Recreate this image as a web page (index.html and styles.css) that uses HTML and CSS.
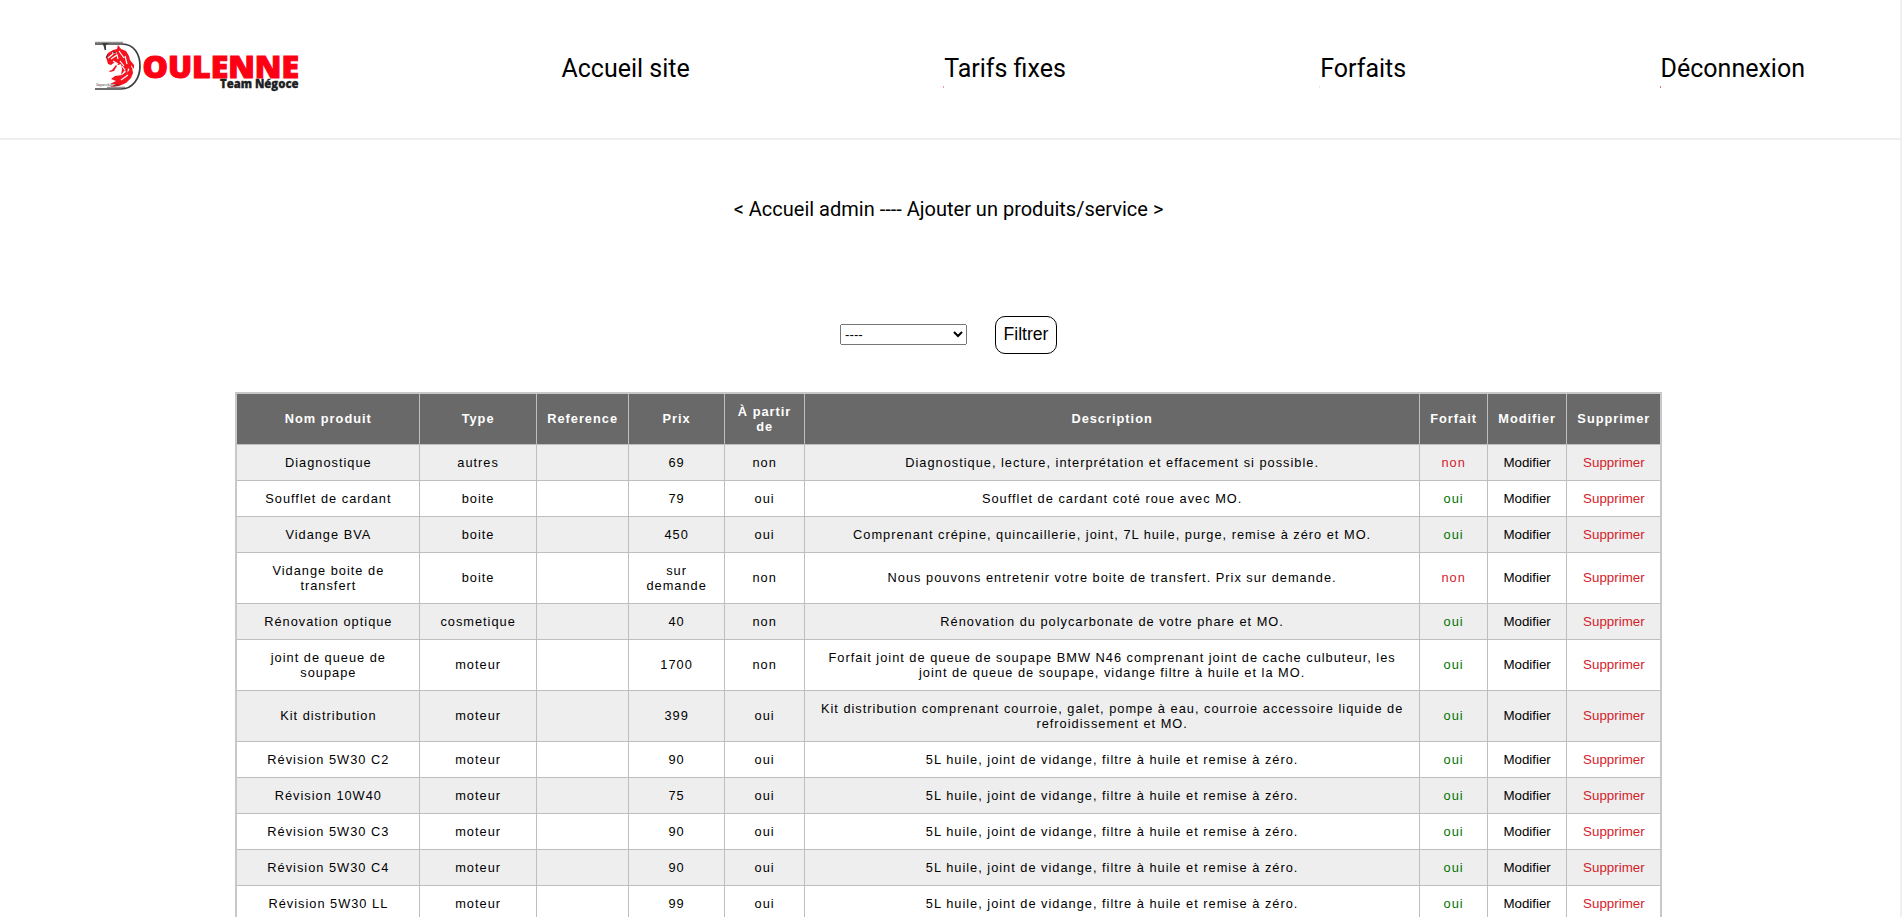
FILE: index.html
```html
<!DOCTYPE html>
<html lang="fr">
<head>
<meta charset="utf-8">
<title>Doulenne Team Négoce</title>
<link rel="stylesheet" href="styles.css">
</head>
<body>
<div class="page">
<header class="header">
  <a class="logo"><svg width="210" height="56" viewBox="0 0 210 56">
    <g fill="none" stroke="#3c3c3e" stroke-width="1.7">
      <path d="M0 5h27c12 0 18 10 18 22s-7 23-19 23H0"/>
      <path d="M0 3.300h28M12 48.300h18" stroke-width=".7"/>
      <path d="M9 5l1.500 6"/>
    </g>
    <path fill="#3c3c3e" d="M7 4h7l-3 2-.5 5-1.500-4z"/>
    <g fill="#f5131f">
      <path d="M11 18l2-4 5-3 4-1 1-4 3 4 5 2 3 5 1 4 4 5v4l-3-4 1 8-4-5-1 7-2-5-4 5 1-6-1-5-3 1-3-3-4 3-3-1z"/>
      <path d="M14 32l3-1 4-5 1 1-3 5-4 1zM20 37l7-1 5-4-1 3 6-7 1 6-2 5-5 5-7 3-9 1 6-3-6 0 6-3-5-2z"/>
    </g>
    <path d="M13 19l5-4M16 20l6-4 1 4M24 12l5 7M25 22l4 5M30 17l2 8M26 41l7-5M22 14h-5M18 22l5 3M27 27l3 4" stroke="#fff" stroke-width="1.200" fill="none"/>
    <path d="M11 19l2-4M18 13l3 1" stroke="#333" stroke-width="1" fill="none"/>
    <text class="logo-tag" x="1" y="47.300" textLength="23" lengthAdjust="spacingAndGlyphs">Supercharger</text>
    <text class="logo-name" x="47.500" y="38.700" textLength="156.500" lengthAdjust="spacingAndGlyphs">OULENNE</text>
    <text class="logo-team" x="125" y="49" textLength="78.500" lengthAdjust="spacingAndGlyphs">Team Négoce</text>
  </svg></a>
  <a class="nav">Accueil site</a>
  <a class="nav tick">Tarifs fixes</a>
  <a class="nav tick tick-light">Forfaits</a>
  <a class="nav tick tick-strong">Déconnexion</a>
</header>
<main class="main">
  <p class="crumbs">&lt; Accueil admin ---- Ajouter un produits/service &gt;</p>
  <form class="filter">
    <select class="select"><option>----</option></select>
    <button class="submit" type="button">Filtrer</button>
  </form>
  <table class="table">
    <colgroup><col class="c1"><col class="c2"><col class="c3"><col class="c4"><col class="c5"><col class="c6"><col class="c7"><col class="c8"><col class="c9"></colgroup>
    <thead><tr><th>Nom produit</th><th>Type</th><th>Reference</th><th>Prix</th><th>À partir de</th><th>Description</th><th>Forfait</th><th>Modifier</th><th>Supprimer</th></tr></thead>
    <tbody>
    <tr><td>Diagnostique</td><td>autres</td><td></td><td>69</td><td>non</td><td>Diagnostique, lecture, interprétation et effacement si possible.</td><td class="no">non</td><td><button>Modifier</button></td><td><button class="no">Supprimer</button></td></tr>
    <tr><td>Soufflet de cardant</td><td>boite</td><td></td><td>79</td><td>oui</td><td>Soufflet de cardant coté roue avec MO.</td><td class="yes">oui</td><td><button>Modifier</button></td><td><button class="no">Supprimer</button></td></tr>
    <tr><td>Vidange BVA</td><td>boite</td><td></td><td>450</td><td>oui</td><td>Comprenant crépine, quincaillerie, joint, 7L huile, purge, remise à zéro et MO.</td><td class="yes">oui</td><td><button>Modifier</button></td><td><button class="no">Supprimer</button></td></tr>
    <tr><td>Vidange boite de transfert</td><td>boite</td><td></td><td>sur demande</td><td>non</td><td>Nous pouvons entretenir votre boite de transfert. Prix sur demande.</td><td class="no">non</td><td><button>Modifier</button></td><td><button class="no">Supprimer</button></td></tr>
    <tr><td>Rénovation optique</td><td>cosmetique</td><td></td><td>40</td><td>non</td><td>Rénovation du polycarbonate de votre phare et MO.</td><td class="yes">oui</td><td><button>Modifier</button></td><td><button class="no">Supprimer</button></td></tr>
    <tr><td>joint de queue de soupape</td><td>moteur</td><td></td><td>1700</td><td>non</td><td>Forfait joint de queue de soupape BMW N46 comprenant joint de cache culbuteur, les joint de queue de soupape, vidange filtre à huile et la MO.</td><td class="yes">oui</td><td><button>Modifier</button></td><td><button class="no">Supprimer</button></td></tr>
    <tr><td>Kit distribution</td><td>moteur</td><td></td><td>399</td><td>oui</td><td>Kit distribution comprenant courroie, galet, pompe à eau, courroie accessoire liquide de refroidissement et MO.</td><td class="yes">oui</td><td><button>Modifier</button></td><td><button class="no">Supprimer</button></td></tr>
    <tr><td>Révision 5W30 C2</td><td>moteur</td><td></td><td>90</td><td>oui</td><td>5L huile, joint de vidange, filtre à huile et remise à zéro.</td><td class="yes">oui</td><td><button>Modifier</button></td><td><button class="no">Supprimer</button></td></tr>
    <tr><td>Révision 10W40</td><td>moteur</td><td></td><td>75</td><td>oui</td><td>5L huile, joint de vidange, filtre à huile et remise à zéro.</td><td class="yes">oui</td><td><button>Modifier</button></td><td><button class="no">Supprimer</button></td></tr>
    <tr><td>Révision 5W30 C3</td><td>moteur</td><td></td><td>90</td><td>oui</td><td>5L huile, joint de vidange, filtre à huile et remise à zéro.</td><td class="yes">oui</td><td><button>Modifier</button></td><td><button class="no">Supprimer</button></td></tr>
    <tr><td>Révision 5W30 C4</td><td>moteur</td><td></td><td>90</td><td>oui</td><td>5L huile, joint de vidange, filtre à huile et remise à zéro.</td><td class="yes">oui</td><td><button>Modifier</button></td><td><button class="no">Supprimer</button></td></tr>
    <tr><td>Révision 5W30 LL</td><td>moteur</td><td></td><td>99</td><td>oui</td><td>5L huile, joint de vidange, filtre à huile et remise à zéro.</td><td class="yes">oui</td><td><button>Modifier</button></td><td><button class="no">Supprimer</button></td></tr>
    </tbody>
  </table>
</main>
</div>
</body>
</html>
```
FILE: styles.css
```css
* { box-sizing: border-box; }
html, body { margin: 0; height: 917px; overflow: hidden; background: #fff; color: #000; font-family: Roboto, sans-serif; }
.page { height: 917px; overflow: hidden; border-right: 2px solid #f0f0f0; }
.header { height: 140px; border-bottom: 2px solid #eee; padding: 0 95px 0 95px; display: flex; justify-content: space-between; align-items: center; }
.logo { display: block; width: 212px; height: 56px; margin-bottom: 4px; }
.logo svg { display: block; overflow: visible; }
.logo-name { font: 800 30px "Open Sans", sans-serif; fill: #fd0013; stroke: #fd0013; stroke-width: 1.1px; }
.logo-team { font: 800 12px "Open Sans", sans-serif; fill: #202022; stroke: #202022; stroke-width: .3px; }
.logo-tag { font: italic 4.5px "Liberation Serif", serif; fill: #333; }
.nav { position: relative; font-size: 25px; line-height: 30px; white-space: nowrap; }
.tick::after { content: ""; position: absolute; left: -1px; top: 32px; width: 1px; height: 2px; background: #e00; opacity: .4; }
.tick-light::after { opacity: .12; }
.tick-strong::after { opacity: .6; }
.main { width: 1897px; }
.crumbs { margin: 57px 0 0; font-size: 20px; line-height: 24px; text-align: center; }
.filter { margin: 95px 0 0; display: flex; justify-content: center; align-items: center; gap: 28px; height: 38px; }
.select { width: 127px; height: 21px; margin: 0 0 2px; padding-top: 1px; font: 13.333px "Liberation Sans", Arial, sans-serif; }
.submit { width: 62px; height: 38px; padding: 0 0 2px; border: 1px solid #000; border-radius: 10px; background: #fff; color: #000; font: 17.6px "Liberation Sans", Arial, sans-serif; }
.table { width: 1427px; margin: 38px auto 0; table-layout: fixed; border-collapse: collapse; border: 2px solid #c8c8c8; font: 12.8px/15px "Liberation Sans", Arial, sans-serif; letter-spacing: 1px; }
.table th, .table td { border: 1px solid #bebebe; padding: 9.6px 9.4px 10.4px 10.6px; text-align: center; height: 36px; }
.table th { background: #696969; color: #fff; height: 51px; padding: 9.6px 4.4px 10.4px 5.6px; }
.table th:nth-child(5) { padding: 9.6px 9.4px 10.4px 10.6px; }
.table tbody tr:nth-child(odd) { background: #eee; }
.table button { display: block; margin: 0 auto; padding: 0; border: 0; background: none; color: #000; font: 13.333px/15px "Liberation Sans", Arial, sans-serif; }
.table .no { color: #d3222a; }
.table .yes { color: #007300; }
.c1 { width: 183px; }
.c2 { width: 117px; }
.c3 { width: 92px; }
.c4 { width: 96px; }
.c5 { width: 80px; }
.c6 { width: 615px; }
.c7 { width: 68px; }
.c8 { width: 79px; }
.c9 { width: 95px; }
```
